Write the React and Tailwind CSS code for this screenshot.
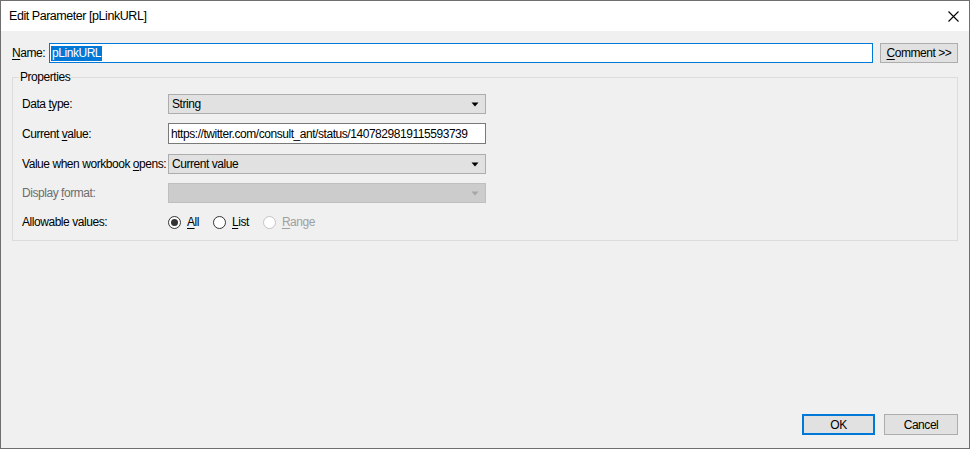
import React from "react";

const font = { fontFamily: '"Liberation Sans", Arial, sans-serif' };

function Key({ children }) {
  return <span className="underline underline-offset-[2px]">{children}</span>;
}

function Arrow({ disabled }) {
  return (
    <svg width="8" height="5" viewBox="0 0 8 5" className="shrink-0">
      <path d="M0.5 0.5 H7.5 L4 4.5 Z" fill={disabled ? "#a6a6a6" : "#000"} />
    </svg>
  );
}

function Select({ value, disabled }) {
  return (
    <div
      className={
        "flex h-[20px] w-[318px] items-center justify-between border pl-[3px] pr-[6px] " +
        (disabled ? "border-[#bfbfbf] bg-[#cccccc]" : "border-[#adadad] bg-[#e1e1e1]")
      }
    >
      <span>{value}</span>
      <Arrow disabled={disabled} />
    </div>
  );
}

function Radio({ checked, disabled, children }) {
  return (
    <div className={"flex items-center gap-[6px] " + (disabled ? "text-[#a0a0a0]" : "")}>
      <span
        className={
          "flex h-[13px] w-[13px] items-center justify-center rounded-full border bg-white " +
          (disabled ? "border-[#c4c4c4]" : "border-[#333]")
        }
      >
        {checked && <span className="h-[7px] w-[7px] rounded-full bg-[#333]" />}
      </span>
      <span>{children}</span>
    </div>
  );
}

function Row({ label, disabled, className, children }) {
  return (
    <div className={"flex items-center " + (className || "")}>
      <div className={"w-[146px] " + (disabled ? "text-[#6d6d6d]" : "")}>{label}</div>
      {children}
    </div>
  );
}

export default function App() {
  return (
    <div
      className="flex h-[449px] w-[970px] flex-col border border-[#6f6f6f] bg-[#f0f0f0] text-[12px] leading-[14px] tracking-[-0.45px] text-black"
      style={font}
    >
      {/* Title bar */}
      <div className="flex h-[30px] shrink-0 items-center justify-between bg-white pl-[8px] pr-[10px]">
        <span className="text-[12.5px]">Edit Parameter [pLinkURL]</span>
        <svg width="11" height="11" viewBox="0 0 11 11">
          <path d="M0.5 0.5 L10.5 10.5 M10.5 0.5 L0.5 10.5" stroke="#000" strokeWidth="1.1" />
        </svg>
      </div>

      <div className="flex flex-1 flex-col px-[11px] pt-[12px] pb-[13px]">
        {/* Name row */}
        <div className="flex h-[20px] items-center">
          <div className="w-[37px]">
            <Key>N</Key>ame:
          </div>
          <div className="flex h-[20px] flex-1 items-center border border-[#0078d7] bg-white pl-[1px]">
            <span className="bg-[#0078d7] px-[1px] leading-[15px] text-white">pLinkURL</span>
          </div>
          <div className="ml-[7px] flex h-[20px] w-[78px] items-center justify-center border border-[#adadad] bg-[#e1e1e1]">
            <span>
              <Key>C</Key>omment &gt;&gt;
            </span>
          </div>
        </div>

        {/* Properties group */}
        <div className="relative mt-[14px] h-[164px] border border-[#dcdcdc] pl-[9px] pt-[16px]">
          <span className="absolute left-[6px] top-[-8px] bg-[#f0f0f0] px-[1px]">Properties</span>

          <Row label={<>Data <Key>t</Key>ype:</>}>
            <Select value="String" />
          </Row>

          <Row label={<>Current <Key>v</Key>alue:</>} className="mt-[9px]">
            <div className="flex h-[21px] w-[318px] items-center border border-[#7a7a7a] bg-white pl-[2px]">
              https://twitter.com/consult_ant/status/1407829819115593739
            </div>
          </Row>

          <Row label={<>Value when workbook <Key>o</Key>pens:</>} className="mt-[10px]">
            <Select value="Current value" />
          </Row>

          <Row label={<>Display <Key>f</Key>ormat:</>} disabled className="mt-[9px]">
            <Select value="" disabled />
          </Row>

          <Row label="Allowable values:" className="mt-[12px]">
            <div className="flex items-center gap-[14px]">
              <Radio checked>
                <Key>A</Key>ll
              </Radio>
              <Radio>
                <Key>L</Key>ist
              </Radio>
              <Radio disabled>
                <Key>R</Key>ange
              </Radio>
            </div>
          </Row>
        </div>

        {/* Buttons */}
        <div className="mt-auto flex justify-end gap-[9px]">
          <div className="flex h-[21px] w-[73px] items-center justify-center border-2 border-[#0078d7] bg-[#e1e1e1]">
            OK
          </div>
          <div className="flex h-[21px] w-[74px] items-center justify-center border border-[#adadad] bg-[#e1e1e1]">
            Cancel
          </div>
        </div>
      </div>
    </div>
  );
}
